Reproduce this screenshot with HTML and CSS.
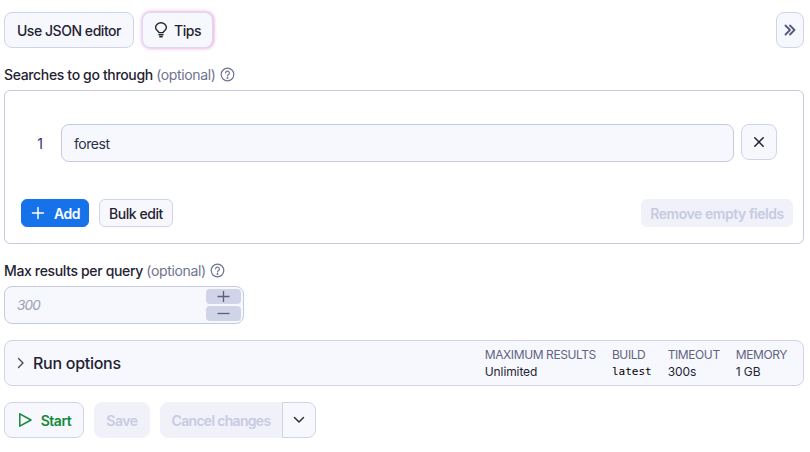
FILE: index.html
```html
<!DOCTYPE html>
<html lang="en">
<head>
<meta charset="utf-8">
<title>Actor input</title>
<link rel="stylesheet" href="styles.css">
</head>
<body>
<div class="page">
  <div class="toolbar">
    <button class="btn json">Use JSON editor</button>
    <button class="btn tips">
      <svg class="tips-icon" width="16" height="16" viewBox="0 0 16 16" fill="none" stroke="#1f2333" stroke-width="1.4" stroke-linecap="round" stroke-linejoin="round"><path d="M5.9 10.600C5.600 9.300 2.600 8.200 2.600 5.600a5.400 4.800 0 0 1 10.800 0c0 2.600-3 3.700-3.300 5Z"/><path d="M6 12.700h4M6.800 14.800h2.400"/></svg>
      Tips
    </button>
    <button class="btn collapse">
      <svg width="12" height="12" viewBox="0 0 12 12" fill="none" stroke="#54597a" stroke-width="1.800" stroke-linecap="round" stroke-linejoin="round"><path d="M1.500 1.500 6 6l-4.500 4.500M6 1.500 10.500 6 6 10.500"/></svg>
    </button>
  </div>

  <div class="label l-search">Searches to go through <span class="opt">(optional)</span>
    <svg class="help" width="15" height="15" viewBox="0 0 15 15" fill="none" stroke="#6e7390" stroke-width="1.200"><circle cx="7.500" cy="7.500" r="6.300"/><path d="M5.600 6a1.900 1.900 0 1 1 2.900 1.600c-.6.4-1 .7-1 1.400" stroke-linecap="round"/><circle cx="7.500" cy="11" r=".4"/></svg>
  </div>

  <section class="panel">
    <div class="row">
      <span class="index">1</span>
      <div class="field value">forest</div>
      <button class="btn x">
        <svg width="12" height="12" viewBox="0 0 12 12" fill="none" stroke="#1f2333" stroke-width="1.500" stroke-linecap="round"><path d="M1.800 1.800l8.400 8.400M10.200 1.800l-8.400 8.400"/></svg>
      </button>
    </div>
    <div class="actions">
      <button class="btn add">
        <svg width="14" height="14" viewBox="0 0 14 14" fill="none" stroke="#fff" stroke-width="1.500" stroke-linecap="round"><path d="M7 1.500v11M1.500 7h11"/></svg>
        Add
      </button>
      <button class="btn bulk">Bulk edit</button>
      <button class="btn remove">Remove empty fields</button>
    </div>
  </section>

  <div class="label l-max">Max results per query <span class="opt">(optional)</span>
    <svg class="help" width="15" height="15" viewBox="0 0 15 15" fill="none" stroke="#6e7390" stroke-width="1.200"><circle cx="7.500" cy="7.500" r="6.300"/><path d="M5.600 6a1.900 1.900 0 1 1 2.900 1.600c-.6.4-1 .7-1 1.400" stroke-linecap="round"/><circle cx="7.500" cy="11" r=".4"/></svg>
  </div>

  <div class="number">
    <span class="placeholder">300</span>
    <div class="stepper">
      <span class="step"><svg width="13" height="13" viewBox="0 0 13 13" fill="none" stroke="#5b6079" stroke-width="1.300"><path d="M6.500 1v11M.5 6.500h12"/></svg></span>
      <span class="step"><svg width="13" height="13" viewBox="0 0 13 13" fill="none" stroke="#5b6079" stroke-width="1.300"><path d="M.5 6.500h12"/></svg></span>
    </div>
  </div>

  <section class="run">
    <svg class="chev" width="10" height="12" viewBox="0 0 10 12" fill="none" stroke="#444960" stroke-width="1.400" stroke-linecap="round" stroke-linejoin="round"><path d="M2.500 1.500 7 6l-4.500 4.500"/></svg>
    <h2 class="run-title">Run options</h2>
    <dl class="meta">
      <div class="meta-item"><dt>MAXIMUM RESULTS</dt><dd>Unlimited</dd></div>
      <div class="meta-item"><dt>BUILD</dt><dd class="mono">latest</dd></div>
      <div class="meta-item"><dt>TIMEOUT</dt><dd>300s</dd></div>
      <div class="meta-item"><dt>MEMORY</dt><dd>1 GB</dd></div>
    </dl>
  </section>

  <div class="footer">
    <button class="btn start">
      <svg width="16" height="16" viewBox="0 0 16 16" fill="none" stroke="#12893a" stroke-width="1.500" stroke-linejoin="round"><path d="M2.800 1.800 14 8 2.800 14.200Z"/></svg>
      Start
    </button>
    <button class="btn disabled save">Save</button>
    <div class="split">
      <button class="btn disabled cancel">Cancel changes</button>
      <button class="btn drop">
        <svg width="12" height="8" viewBox="0 0 12 8" fill="none" stroke="#2c3045" stroke-width="1.500" stroke-linecap="round" stroke-linejoin="round"><path d="M1.500 1.500 6 6l4.500-4.500"/></svg>
      </button>
    </div>
  </div>
</div>
</body>
</html>
```
FILE: styles.css
```css
* { box-sizing: border-box; }
html, body { margin: 0; padding: 0; background: #fff; }
body { font-family: Inter, "Noto Sans", sans-serif; color: #1f2333; font-size: 14px; overflow: hidden; }
.page { width: 810px; height: 452px; padding: 12px 6px 0 4px; }

.btn {
  font-family: inherit; font-size: 14px; letter-spacing: -0.45px; font-weight: 500; color: #1f2333;
  background: #f7f8fd; border: 1px solid #d0d4ea; border-radius: 8px;
  display: inline-flex; align-items: center; justify-content: center; padding: 0; margin: 0;
}

.toolbar { display: flex; gap: 8px; height: 36px; }
.json { width: 130px; }
.tips { width: 71px; gap: 5px; box-shadow: 0 0 4px #e3b5f0, 1px 0 3px #f7c0d0; border-color: #ded6f2; padding-right: 1px; }
.collapse { width: 28px; margin-left: auto; }

.label { display: flex; align-items: center; font-weight: 500; font-size: 14px; letter-spacing: -0.35px; line-height: 18px; white-space: pre-wrap; }
.opt { color: #6e7390; font-weight: 400; }
.help { margin-left: 4px; margin-top: -2px; }
.l-search { margin-top: 18px; }
.l-max { margin-top: 18px; }

.panel { margin-top: 6px; height: 154px; border: 1px solid #c4c9e0; border-radius: 6px; padding: 33px 10px 16px 16px; display: flex; flex-direction: column; justify-content: space-between; }
.row { display: flex; align-items: flex-start; }
.index { width: 40px; padding-right: 18px; text-align: right; line-height: 40px; color: #3c2a78; font-size: 14px; }
.field { flex: 1; height: 38px; background: #f7f8fd; border: 1px solid #c4c9e0; border-radius: 8px; padding: 0 12px; line-height: 37px; font-size: 14px; letter-spacing: -0.45px; color: #2c3045; }
.x { width: 36px; height: 36px; margin-left: 7px; margin-right: 16px; }

.actions { display: flex; gap: 10px; height: 28px; }
.actions .btn { height: 28px; border-radius: 6px; }
.add { width: 68px; background: #1672eb; border-color: #1672eb; color: #fff; font-weight: 600; gap: 9px; padding-left: 1px; }
.bulk { width: 74px; }
.remove { width: 152px; margin-left: auto; background: #f1f2f9; border-color: #f1f2f9; color: #c6cbe3; font-weight: 600; }

.number { margin-top: 6px; width: 240px; height: 38px; background: #f7f8fd; border: 1px solid #c4c9e0; border-radius: 8px; display: flex; align-items: center; justify-content: space-between; padding: 2px 2px 2px 12px; }
.placeholder { font-style: italic; color: #9a9fb5; font-size: 13.500px; letter-spacing: -0.8px; }
.stepper { display: flex; flex-direction: column; gap: 2px; width: 35px; }
.step { height: 15px; background: #d0d4e8; border-radius: 4px; display: flex; align-items: center; justify-content: center; }

.run { margin-top: 16px; height: 46px; background: #f7f8fd; border: 1px solid #d0d4ea; border-radius: 8px; display: flex; align-items: center; padding: 0 16px 0 11px; }
.chev { flex: none; }
.run-title { margin: 0 0 0 7px; font-size: 16px; letter-spacing: -0.28px; font-weight: 500; color: #1f2333; }
.meta { display: flex; gap: 16px; margin: 0 0 0 auto; }
.meta-item { display: block; }
.meta dt { font-size: 12px; letter-spacing: -0.4px; line-height: 17px; font-weight: 400; color: #5f6480; }
.meta dd { margin: 0; font-size: 12px; letter-spacing: -0.1px; line-height: 17px; color: #1f2333; }
.meta dd.mono { font-family: "DejaVu Sans Mono", monospace; font-size: 11px; letter-spacing: 0; color: #000; }

.footer { display: flex; gap: 10px; margin-top: 16px; height: 36px; }
.footer .btn { height: 36px; }
.start { width: 80px; gap: 8px; color: #12893a; font-weight: 600; }
.disabled { background: #f1f2f9; border-color: #f1f2f9; color: #c6cbe3; font-weight: 600; }
.save { width: 56px; }
.split { display: flex; }
.cancel { width: 122px; border-radius: 8px 0 0 8px; letter-spacing: -0.7px; }
.drop { width: 34px; border-radius: 0 8px 8px 0; }
```
